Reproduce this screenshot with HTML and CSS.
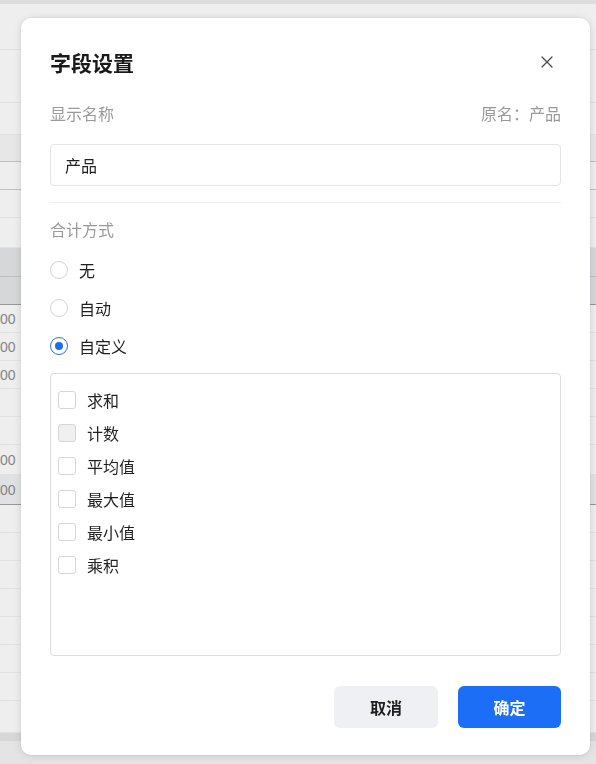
FILE: index.html
```html
<!DOCTYPE html>
<html lang="zh-CN">
<head>
<meta charset="utf-8">
<title>字段设置</title>
<link rel="stylesheet" href="styles.css">
</head>
<body>
<div class="sheet">
  <div class="row h4 top"></div>
  <div class="row h46"></div>
  <div class="row h53"></div>
  <div class="row h32"></div>
  <div class="row h27 shade blue"></div>
  <div class="row h28 blue"></div>
  <div class="row h28"></div>
  <div class="row h30"></div>
  <div class="row h29 head"></div>
  <div class="row h28 head dark"></div>
  <div class="row h28"><span class="cell">00</span></div>
  <div class="row h28"><span class="cell">00</span></div>
  <div class="row h28"><span class="cell">00</span></div>
  <div class="row h28"></div>
  <div class="row h28"></div>
  <div class="row h30"><span class="cell">00</span></div>
  <div class="row h30 sel dark"><span class="cell">00</span></div>
  <div class="row h28"></div>
  <div class="row h28"></div>
  <div class="row h28"></div>
  <div class="row h28"></div>
  <div class="row h28"></div>
  <div class="row h28"></div>
  <div class="row h28"></div>
  <div class="row h32"></div>
  <div class="row h8 bottom"></div>
  <div class="row h28 tail"></div>
</div>

<div class="mask"></div>

<div class="modal" role="dialog" aria-label="字段设置">
  <div class="modal-head">
    <h2 class="title">字段设置</h2>
    <button class="close" aria-label="关闭">
      <svg width="12" height="12" viewBox="0 0 12 12"><path d="M1 1L11 11M11 1L1 11" stroke="#4a4a4a" stroke-width="1.3" fill="none" stroke-linecap="round"/></svg>
    </button>
  </div>

  <div class="label-row">
    <span class="label">显示名称</span>
    <span class="label">原名：产品</span>
  </div>
  <div class="input">产品</div>

  <div class="divider"></div>

  <div class="label section">合计方式</div>
  <div class="radios">
    <div class="radio-row"><span class="radio"></span><span>无</span></div>
    <div class="radio-row"><span class="radio"></span><span>自动</span></div>
    <div class="radio-row"><span class="radio on"></span><span>自定义</span></div>
  </div>

  <div class="checkbox-box">
    <div class="check-row"><span class="check"></span><span>求和</span></div>
    <div class="check-row"><span class="check dis"></span><span>计数</span></div>
    <div class="check-row"><span class="check"></span><span>平均值</span></div>
    <div class="check-row"><span class="check"></span><span>最大值</span></div>
    <div class="check-row"><span class="check"></span><span>最小值</span></div>
    <div class="check-row"><span class="check"></span><span>乘积</span></div>
  </div>

  <div class="footer">
    <button class="btn cancel">取消</button>
    <button class="btn ok">确定</button>
  </div>
</div>
</body>
</html>
```

FILE: styles.css
```css
* { box-sizing: border-box; }
html, body { margin: 0; padding: 0; }
body {
  width: 596px;
  height: 764px;
  overflow: hidden;
  background: #f4f4f4;
  font-family: "Noto Sans CJK SC", "Noto Sans", sans-serif;
  color: #1f1f1f;
}

/* background sheet */
.sheet { display: flex; flex-direction: column; }
.row {
  border-bottom: 1px solid #e9e9e9;
  background: #f6f6f6;
  display: flex;
  align-items: center;
}
.h4 { height: 4px; }
.h8 { height: 8px; }
.h27 { height: 27px; }
.h28 { height: 28px; }
.h29 { height: 29px; }
.h30 { height: 30px; }
.h32 { height: 32px; }
.h46 { height: 46px; }
.h53 { height: 53px; }
.top { background: #e4e4e4; border-bottom: none; }
.shade { background: #efefef; }
.blue { border-bottom-color: #b9c5ee; }
.head { background: #dcdee1; border-bottom-color: #c4c6c9; }
.dark { border-bottom-color: #9c9c9c; }
.sel { background: #e8e9ea; }
.bottom { background: #dedede; border-bottom: none; }
.tail { background: #ececec; border-bottom: none; }
.cell {
  white-space: nowrap;
  font-family: "Liberation Sans", sans-serif;
  font-size: 14px;
  color: #8a8a8a;
}

.mask {
  position: fixed;
  inset: 0;
  background: rgba(0, 0, 0, 0.03);
}

/* modal */
.modal {
  position: fixed;
  left: 21px;
  top: 18px;
  width: 569px;
  height: 737px;
  background: #fff;
  border-radius: 10px;
  box-shadow: 0 1px 10px rgba(0, 0, 0, 0.12), 0 0 0 1px rgba(0, 0, 0, 0.03);
  padding: 30px 29px 27px;
  display: flex;
  flex-direction: column;
}
.modal-head {
  height: 28px;
  display: flex;
  align-items: center;
  justify-content: space-between;
}
.title {
  margin: 0;
  font-size: 21px;
  font-weight: 700;
  line-height: 28px;
  color: #1a1a1a;
}
.close {
  border: none;
  background: none;
  padding: 0;
  width: 12px;
  height: 12px;
  margin-right: 8px;
  display: flex;
}

.label-row {
  margin-top: 25px;
  display: flex;
  justify-content: space-between;
}
.label {
  font-size: 16px;
  line-height: 24px;
  color: #9a9a9a;
}
.input {
  margin-top: 19px;
  height: 42px;
  border: 1px solid #e4e4e4;
  border-radius: 4px;
  padding: 0 14px;
  display: flex;
  align-items: center;
  font-size: 16px;
  color: #222;
}
.divider {
  margin-top: 16px;
  height: 1px;
  background: #efefef;
}
.section { margin-top: 14px; }

.radios {
  margin-top: 17px;
  display: flex;
  flex-direction: column;
  gap: 14px;
}
.radio-row, .check-row {
  display: flex;
  align-items: center;
  gap: 11px;
  height: 24px;
  font-size: 16px;
  color: #1f1f1f;
}
.radio {
  width: 18px;
  height: 18px;
  border-radius: 50%;
  border: 1px solid #d3d3d3;
  display: flex;
  align-items: center;
  justify-content: center;
}
.radio.on { border-color: #2d6fd8; }
.radio.on::after {
  content: "";
  width: 8px;
  height: 8px;
  border-radius: 50%;
  background: #1c6ef2;
}

.checkbox-box {
  margin-top: 15px;
  height: 283px;
  border: 1px solid #dcdcdc;
  border-radius: 4px;
  padding: 14px 7px;
  display: flex;
  flex-direction: column;
  gap: 9px;
}
.check {
  width: 18px;
  height: 18px;
  border: 1px solid #d6d6d6;
  border-radius: 3px;
  background: #fff;
}
.check.dis { background: #f0f0f0; }

.footer {
  margin-top: 30px;
  display: flex;
  justify-content: flex-end;
  gap: 20px;
}
.btn {
  height: 42px;
  border: none;
  border-radius: 6px;
  font-family: inherit;
  font-size: 16px;
  font-weight: 700;
}
.cancel { width: 104px; background: #eef0f3; color: #1f1f1f; }
.ok { width: 103px; background: #1b6ef5; color: #fff; }
```
